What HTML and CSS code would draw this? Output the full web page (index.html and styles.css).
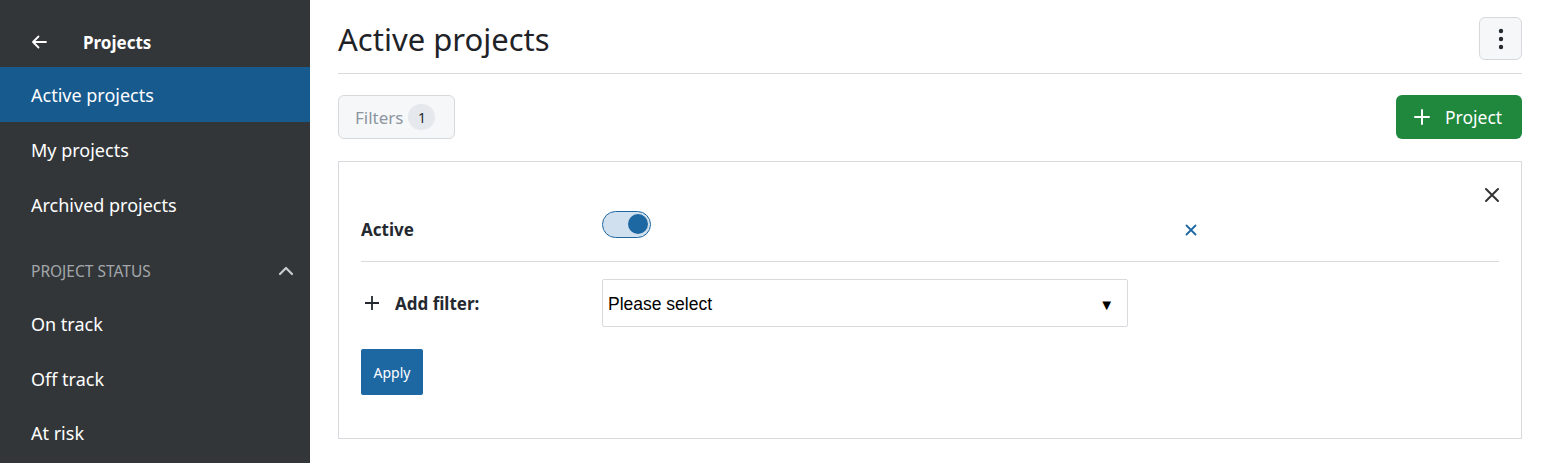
FILE: index.html
```html
<!DOCTYPE html>
<html>
<head>
<meta charset="utf-8">
<link rel="stylesheet" href="styles.css">
</head>
<body>
<div class="app">
  <aside class="sidebar">
    <div class="side-head">
      <svg class="back" width="18" height="18" viewBox="0 0 18 18"><path d="M16 9H3M8.5 3.5L3 9l5.5 5.5" fill="none" stroke="#fff" stroke-width="1.8" stroke-linecap="round" stroke-linejoin="round"/></svg>
      <span class="side-title">Projects</span>
    </div>
    <nav class="side-nav">
      <a class="nav-item active">Active projects</a>
      <a class="nav-item">My projects</a>
      <a class="nav-item">Archived projects</a>
    </nav>
    <div class="side-section">
      <span>PROJECT STATUS</span>
      <svg width="16" height="10" viewBox="0 0 16 10"><path d="M2 8l6-6 6 6" fill="none" stroke="#c9ccd0" stroke-width="2.2" stroke-linecap="round" stroke-linejoin="round"/></svg>
    </div>
    <nav class="side-nav status">
      <a class="nav-item">On track</a>
      <a class="nav-item">Off track</a>
      <a class="nav-item">At risk</a>
    </nav>
  </aside>
  <main class="main">
    <header class="page-head">
      <h1>Active projects</h1>
      <button class="kebab" aria-label="More">
        <svg width="6" height="22" viewBox="0 0 6 22"><circle cx="3" cy="3" r="2.2" fill="#24292f"/><circle cx="3" cy="11" r="2.2" fill="#24292f"/><circle cx="3" cy="19" r="2.2" fill="#24292f"/></svg>
      </button>
    </header>
    <div class="toolbar">
      <button class="filters-btn">Filters <span class="badge">1</span></button>
      <button class="add-btn">
        <svg width="16" height="16" viewBox="0 0 16 16"><path d="M8 1v14M1 8h14" stroke="#fff" stroke-width="2" stroke-linecap="round"/></svg>
        <span>Project</span>
      </button>
    </div>
    <section class="filter-panel">
      <div class="panel-close">
        <svg width="16" height="16" viewBox="0 0 16 16"><path d="M2 2l12 12M14 2L2 14" stroke="#333" stroke-width="2" stroke-linecap="round"/></svg>
      </div>
      <div class="filter-row">
        <label class="filter-label">Active</label>
        <div class="filter-value">
          <span class="toggle"><span class="knob"></span></span>
        </div>
        <div class="filter-remove">
          <svg width="12" height="12" viewBox="0 0 12 12"><path d="M1.5 1.5l9 9M10.5 1.5l-9 9" stroke="#1d67a3" stroke-width="1.8" stroke-linecap="round"/></svg>
        </div>
      </div>
      <div class="add-row">
        <label class="filter-label add-label">
          <svg width="16" height="16" viewBox="0 0 16 16"><path d="M8 1v14M1 8h14" stroke="#24292f" stroke-width="1.8"/></svg>
          Add filter:
        </label>
        <div class="select">
          <span>Please select</span>
          <span class="caret">▼</span>
        </div>
      </div>
      <button class="apply">Apply</button>
    </section>
  </main>
</div>
</body>
</html>
```
FILE: styles.css
```css
* { box-sizing: border-box; }
html, body { margin: 0; padding: 0; }
body {
  font-family: "Noto Sans", "Open Sans", sans-serif;
  color: #24292f;
  background: #fff;
  width: 1542px;
  height: 463px;
  overflow: hidden;
}
.app { display: flex; height: 463px; }
.sidebar {
  width: 310px;
  flex: none;
  background: #333639;
  color: #fff;
}
.side-head {
  height: 67px;
  display: flex;
  align-items: center;
  padding-left: 30px;
  padding-top: 17px;
}
.side-title {
  font-weight: 700;
  font-size: 17px;
  margin-left: 35px;
}
.side-nav { display: flex; flex-direction: column; }
.nav-item {
  height: 55px;
  display: flex;
  align-items: center;
  padding-left: 31px;
  font-size: 18px;
  color: #fff;
}
.nav-item.active { background: #175a8e; }
.side-section {
  display: flex;
  justify-content: space-between;
  align-items: center;
  height: 50px;
  margin-top: 14px;
  padding: 0 16px 0 31px;
  font-size: 15.5px;
  color: #a3a7ab;
}
.status { padding-top: 1px; }
.status .nav-item { height: 54.5px; }
.main {
  flex: 1;
  padding: 0 20px 0 28px;
}
.page-head {
  height: 74px;
  border-bottom: 1px solid #d8dadd;
  display: flex;
  align-items: center;
  justify-content: space-between;
  padding-bottom: 0;
  padding-top: 4px;
}
h1 {
  margin: 0;
  font-weight: 400;
  font-size: 31px;
  color: #1f2328;
}
.kebab {
  width: 43px;
  height: 43px;
  border: 1px solid #d6d8dc;
  border-radius: 6px;
  background: #f6f7f9;
  display: flex;
  align-items: center;
  justify-content: center;
  padding: 0;
}
.toolbar {
  display: flex;
  justify-content: space-between;
  margin-top: 21px;
}
button { font-family: inherit; cursor: pointer; }
.filters-btn {
  height: 44px;
  width: 117px;
  border: 1px solid #d6d8dc;
  border-radius: 6px;
  background: #f6f7f9;
  color: #8c959f;
  font-size: 17px;
  display: flex;
  align-items: center;
  gap: 5px;
  padding: 0 16px;
}
.badge {
  width: 27px;
  height: 26px;
  border-radius: 13px;
  background: #e5e8ec;
  color: #24292f;
  font-size: 14px;
  display: flex;
  align-items: center;
  justify-content: center;
}
.add-btn {
  height: 44px;
  width: 126px;
  border: none;
  border-radius: 6px;
  background: #1f883d;
  color: #fff;
  font-size: 17.5px;
  display: flex;
  align-items: center;
  gap: 15px;
  padding: 0 18px;
}
.filter-panel {
  margin-top: 22px;
  border: 1px solid #d8dadd;
  height: 278px;
  padding: 0 22px;
  position: relative;
}
.panel-close {
  position: absolute;
  right: 21px;
  top: 25px;
  line-height: 0;
}
.filter-row {
  display: flex;
  align-items: center;
  height: 100px;
  padding-top: 36px;
  border-bottom: 1px solid #d8dadd;
}
.filter-label {
  width: 241px;
  font-weight: 700;
  font-size: 17px;
  display: flex;
  align-items: center;
}
.filter-value { width: 583px; }
.toggle {
  display: block;
  width: 49px;
  height: 27px;
  border-radius: 14px;
  background: #d1e0ee;
  border: 1.5px solid #1d67a3;
  position: relative;
  margin-top: -10px;
}
.knob {
  position: absolute;
  right: 2px;
  top: 2px;
  width: 20px;
  height: 20px;
  border-radius: 50%;
  background: #1d67a3;
}
.filter-remove { line-height: 0; }
.add-row {
  display: flex;
  align-items: center;
  margin-top: 17px;
}
.add-label { gap: 15px; padding-left: 3px; }
.select {
  width: 526px;
  height: 48px;
  border: 1px solid #d8dadd;
  border-radius: 2px;
  display: flex;
  align-items: center;
  justify-content: space-between;
  padding: 2px 13px 0 5px;
  font-family: "Liberation Sans", Arial, sans-serif;
  font-size: 17.5px;
  color: #000;
}
.caret { font-size: 15px; }
.apply {
  margin-top: 22px;
  width: 62px;
  height: 46px;
  background: #1d67a3;
  color: #fff;
  border: none;
  border-radius: 2px;
  font-size: 14px;
  padding: 0;
}
```
